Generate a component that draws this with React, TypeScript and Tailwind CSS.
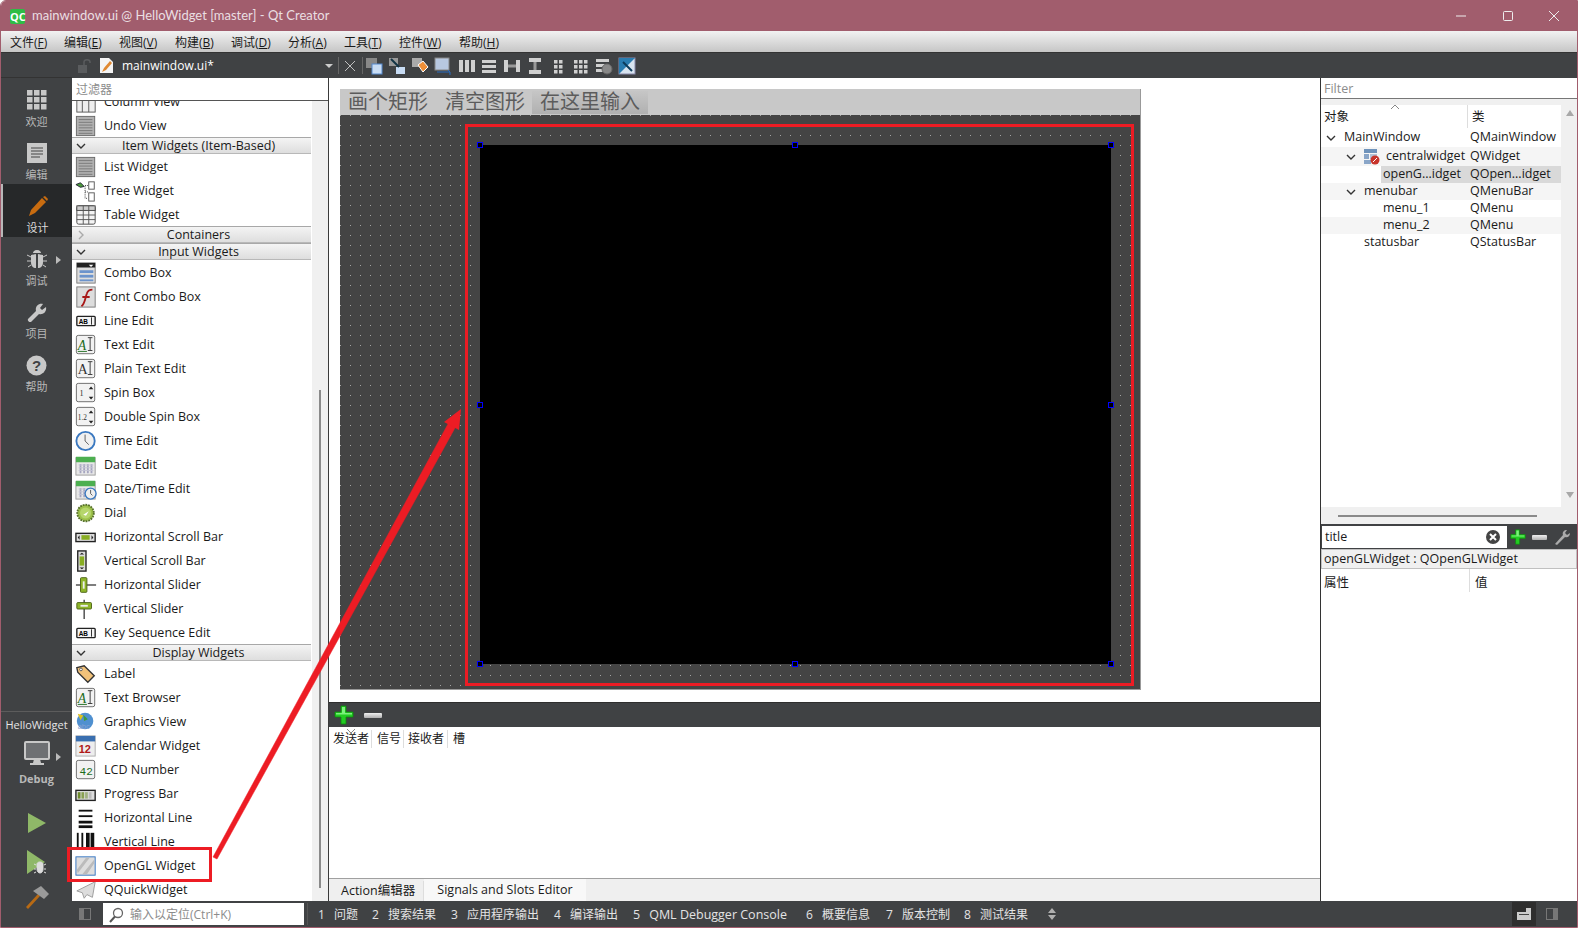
import React from "react";

const S = ({ children, size = 24, className = "" }: { children: React.ReactNode; size?: number; className?: string }) => (
  <svg width={size} height={size} viewBox="0 0 24 24" className={"shrink-0 " + className}>{children}</svg>
);

const box = <rect x="1.5" y="1.5" width="20" height="20" rx="2" fill="#f2f2f2" stroke="#666" />;
const lines = (
  <>
    <rect x="1.5" y="1.5" width="20" height="21" fill="#b0b0b0" stroke="#666" />
    {[5, 8, 11, 14, 17, 20].map((y) => <line key={y} x1="4" x2="19" y1={y} y2={y} stroke="#777" />)}
  </>
);
const cal = (
  <>
    <rect x="1" y="4" width="21" height="19" fill="#e8e8e8" stroke="#999" />
    <rect x="1" y="3" width="21" height="6" fill="#4caf50" />
    {[6, 10, 14, 18].map((x) => <line key={x} x1={x} x2={x} y1="11" y2="21" stroke="#a6a6c0" strokeWidth="2" />)}
    {[12, 15, 18].map((y) => <line key={y} x1="4" x2="20" y1={y} y2={y} stroke="#c4c4d4" />)}
  </>
);

const icons: Record<string, React.ReactNode> = {
  column: <><rect x="2" y="2" width="20" height="21" fill="#eee" stroke="#555" /><line x1="8" x2="8" y1="2" y2="23" stroke="#555" /><line x1="15" x2="15" y1="2" y2="23" stroke="#555" /></>,
  list: lines,
  tree: <><path d="M1 5l5-2 4 4-4 1z" fill="#4a9a3a" stroke="#223" /><path d="M14 6h-3v14h3M11 13h3" stroke="#333" strokeDasharray="1 1" fill="none" /><rect x="15" y="2" width="6" height="8" fill="#fff" stroke="#555" /><rect x="15" y="14" width="6" height="9" fill="#fff" stroke="#555" /></>,
  table: <><rect x="2" y="2" width="20" height="20" rx="2" fill="#f4f4f4" stroke="#444" /><rect x="2" y="2" width="20" height="5" fill="#ccc" stroke="#444" />{[9, 15].map((x) => <line key={x} x1={x} x2={x} y1="2" y2="22" stroke="#555" />)}{[12, 17].map((y) => <line key={y} x1="2" x2="22" y1={y} y2={y} stroke="#555" />)}</>,
  combo: <><rect x="2" y="1" width="20" height="22" fill="#ddd" stroke="#777" /><rect x="2" y="1" width="20" height="5" fill="#222" /><path d="M15 3h5l-2.500 2.500z" fill="#fff" /><rect x="5" y="9" width="15" height="3" fill="#6b93cc" /><rect x="5" y="14" width="15" height="3" fill="#6b93cc" /><rect x="5" y="19" width="15" height="2" fill="#6b93cc" /></>,
  font: <><rect x="2" y="1" width="20" height="22" fill="#ddd" stroke="#777" /><path d="M7 22c4-3 4-9 6-14 1-3 3-4 6-4M8 12h8" stroke="#a81818" strokeWidth="2" fill="none" /></>,
  line: <><rect x="2" y="7" width="20" height="10" rx="1" fill="#f4f4f4" stroke="#222" strokeWidth="1.500" /><text x="4" y="15" fontSize="7" fontWeight="700" fontFamily="Liberation Sans">AB</text><line x1="18" x2="18" y1="8" y2="16" stroke="#222" /></>,
  text: <>{box}<text x="3" y="17" fontSize="15" fontStyle="italic" fill="#1c6c1c" fontFamily="Liberation Serif">A</text><line x1="3" x2="13" y1="19" y2="19" stroke="#1c6c1c" /><path d="M14 4h5M16.500 4v14M14 18h5" stroke="#333" fill="none" /></>,
  plain: <>{box}<text x="3" y="17" fontSize="15" fill="#333" fontFamily="Liberation Serif">A</text><path d="M14 4h5M16.500 4v14M14 18h5" stroke="#333" fill="none" /></>,
  spin: <>{box}<text x="5" y="15" fontSize="9" fill="#333" fontFamily="Liberation Serif">1</text><path d="M15 8l2.500-3 2.500 3zM15 16l2.500 3 2.500-3z" fill="#222" /></>,
  dspin: <>{box}<text x="3" y="15" fontSize="8" fill="#333" fontFamily="Liberation Serif">1.2</text><path d="M15 8l2.500-3 2.500 3zM15 16l2.500 3 2.500-3z" fill="#222" /></>,
  time: <><circle cx="11.500" cy="12" r="10" fill="#f0f0f0" stroke="#3a78c0" strokeWidth="2" /><path d="M11 5v7l4 4" stroke="#555" fill="none" /></>,
  date: cal,
  datetime: <>{cal}<circle cx="17" cy="17" r="6" fill="#eee" stroke="#3a78c0" strokeWidth="1.500" /><path d="M17 13v4l2 2" stroke="#555" fill="none" /></>,
  dial: <><circle cx="11.500" cy="12" r="9" fill="#9cc04a" stroke="#56702a" strokeWidth="2" strokeDasharray="2 1" /><circle cx="11.500" cy="12" r="6" fill="#b6d66c" /><path d="M9 14l6-4-3 5z" fill="#fff" /></>,
  hscroll: <><rect x="1" y="8" width="21" height="9" fill="#ddd" stroke="#222" strokeWidth="1.500" /><rect x="7" y="10" width="9" height="5" fill="#88ad22" /><path d="M5 10v5l-2-2.500zM18 10v5l2-2.500z" fill="#222" /></>,
  vscroll: <><rect x="3" y="1" width="9" height="22" fill="#ddd" stroke="#222" strokeWidth="1.500" /><rect x="5" y="7" width="5" height="10" fill="#88ad22" /><path d="M5 5h5l-2.500-2zM5 19h5l-2.500 2z" fill="#222" /></>,
  hslider: <><line x1="1" x2="23" y1="12" y2="12" stroke="#444" strokeWidth="1.500" /><rect x="6" y="4" width="7" height="16" rx="1" fill="#8eb52a" stroke="#4a6014" /><line x1="9.500" x2="9.500" y1="8" y2="16" stroke="#eee" strokeWidth="2" /></>,
  vslider: <><line x1="10" x2="10" y1="2" y2="23" stroke="#444" strokeWidth="1.500" /><rect x="2" y="5" width="16" height="7" rx="1" fill="#8eb52a" stroke="#4a6014" /><line x1="6" x2="14" y1="8.500" y2="8.500" stroke="#eee" strokeWidth="2" /></>,
  label: <><path d="M2 5l8-2 11 11-7 7L3 10z" fill="#f2c27a" stroke="#333" strokeWidth="1.500" /><circle cx="6.500" cy="7" r="1.500" fill="#fff" stroke="#555" /></>,
  graphics: <><circle cx="11" cy="11" r="9" fill="#4f90d0" /><path d="M3 3l6 2-3 5z" fill="#e0c020" /><path d="M9 4l5 5-4 2z" fill="#3f9a3f" /><text x="3" y="20" fontSize="8" fill="#8aa0d0" fontFamily="Liberation Sans">abc</text></>,
  calendar: <><rect x="1" y="1" width="21" height="22" fill="#eee" stroke="#aaa" /><rect x="1" y="1" width="21" height="6" fill="#3a6fb0" /><text x="4" y="20" fontSize="12" fontWeight="700" fill="#b01818" fontFamily="Liberation Sans">12</text></>,
  lcd: <>{box}<text x="5" y="17" fontSize="12" fill="#1c6c1c" fontFamily="Liberation Mono">42</text></>,
  progress: <><rect x="1" y="8" width="21" height="11" fill="#ddd" stroke="#222" strokeWidth="1.500" /><rect x="3" y="10" width="3" height="7" fill="#6e8a2c" /><rect x="7" y="10" width="3" height="7" fill="#88a050" /><rect x="11" y="10" width="3" height="7" fill="#a0b080" /><rect x="15" y="10" width="3" height="7" fill="#bbb" /></>,
  hline: <>{[3, 9, 15, 20].map((y, i) => <rect key={y} x="4" y={y} width="15" height={i > 1 ? 3 : 2} fill="#111" />)}</>,
  vline: <>{[2, 7, 12, 17].map((x, i) => <rect key={x} x={x} y="2" width={i > 1 ? 4 : 2} height="18" fill="#111" />)}</>,
  opengl: <><rect x="1" y="2" width="21" height="20" fill="#ddd" stroke="#2d70c0" /><path d="M2 16L12 3h4L3 20zM8 21L21 5v4L13 21z" fill="#bbb" /></>,
  quick: <path d="M22 3L2 13l6 2 2 6 3-4 6 3z" fill="#ddd" stroke="#999" />,
};

type Row = [string, string] | [string];
const widgets: Row[] = [
  ["Column View", "column"], ["Undo View", "list"], ["Item Widgets (Item-Based)"], ["List Widget", "list"], ["Tree Widget", "tree"], ["Table Widget", "table"], ["Containers"], ["Input Widgets"],
  ["Combo Box", "combo"], ["Font Combo Box", "font"], ["Line Edit", "line"], ["Text Edit", "text"], ["Plain Text Edit", "plain"], ["Spin Box", "spin"], ["Double Spin Box", "dspin"], ["Time Edit", "time"], ["Date Edit", "date"], ["Date/Time Edit", "datetime"], ["Dial", "dial"], ["Horizontal Scroll Bar", "hscroll"], ["Vertical Scroll Bar", "vscroll"], ["Horizontal Slider", "hslider"], ["Vertical Slider", "vslider"], ["Key Sequence Edit", "line"], ["Display Widgets"],
  ["Label", "label"], ["Text Browser", "text"], ["Graphics View", "graphics"], ["Calendar Widget", "calendar"], ["LCD Number", "lcd"], ["Progress Bar", "progress"], ["Horizontal Line", "hline"], ["Vertical Line", "vline"], ["OpenGL Widget", "opengl"], ["QQuickWidget", "quick"],
];

const Chevron = ({ open = true, color = "#333" }: { open?: boolean; color?: string }) => (
  <svg width="10" height="10" viewBox="0 0 10 10" className="shrink-0">
    <path d={open ? "M1 3l4 4 4-4" : "M3 1l4 4-4 4"} stroke={color} strokeWidth="1.400" fill="none" />
  </svg>
);

const WidgetBox = () => (
  <div className="w-[257px] shrink-0 flex flex-col border-r border-[#3a3a3a] bg-white">
    <div className="h-[23px] shrink-0 pl-[4px] pt-[2px] flex items-center text-[12px] text-[#8c8c8c] border-b border-[#555]">过滤器</div>
    <div className="flex-1 flex overflow-hidden">
      <div className="w-[240px] shrink-0 -mt-[12px]">
        {widgets.map((r) =>
          r.length === 1 ? (
            <div key={r[0]} className="h-[17px] flex items-center relative mr-[1px] pl-[4px] border-t border-[#a8a8a8] border-b-[#b8b8b8] border-b bg-gradient-to-b from-[#f4f4f4] to-[#dedede]">
              <Chevron open={r[0] !== "Containers"} color={r[0] === "Containers" ? "#aaa" : "#333"} />
              <span className="flex-1 text-center text-[12.5px] leading-none text-[#1a1a1a] pt-[2px]">{r[0]}</span>
            </div>
          ) : (
            <div key={r[0]} className="h-[24px] flex items-center pl-[3px] pt-[2px] text-[12.5px] text-[#1a1a1a]">
              <S size={22} className="mr-[7px]">{icons[r[1]]}</S>
              <span>{r[0]}</span>
            </div>
          )
        )}
      </div>
      <div className="flex-1 bg-[#f0f0f0] flex justify-center">
        <div className="w-[2px] bg-[#8a8a8a] mt-[289px] mb-[13px]" />
      </div>
    </div>
  </div>
);

const Handle = ({ className }: { className: string }) => (
  <div className={"absolute w-[6px] h-[6px] border border-[#0000ff] bg-black " + className} />
);

const Designer = () => (
  <div className="flex-1 bg-white pl-[11px] pt-[11px]">
    <div className="w-[801px] h-[601px] flex flex-col border-r border-b border-[#999]">
      <div className="h-[26px] shrink-0 bg-[#c8c8c8] flex items-center text-[20px] text-[#5c5c5c] leading-none">
        <span className="ml-[8px]">画个矩形</span>
        <span className="ml-[17px]">清空图形</span>
        <span className="ml-[7px] h-[23px] w-[116px] pl-[8px] flex items-center bg-gradient-to-b from-[#c6c6c6] to-[#b0b0b0]">在这里输入</span>
      </div>
      <div className="flex-1 pt-[30px] pl-[140px] bg-[#444444] bg-[radial-gradient(circle_at_0.5px_0.5px,#a4a4a4_0.7px,transparent_0.71px)] bg-[length:10px_10px]">
        <div className="relative w-[631px] h-[519px] bg-black">
          <Handle className="-left-[3px] -top-[3px]" />
          <Handle className="left-[312px] -top-[3px]" />
          <Handle className="-right-[3px] -top-[3px]" />
          <Handle className="-left-[3px] top-[257px]" />
          <Handle className="-right-[3px] top-[257px]" />
          <Handle className="-left-[3px] -bottom-[3px]" />
          <Handle className="left-[312px] -bottom-[3px]" />
          <Handle className="-right-[3px] -bottom-[3px]" />
        </div>
      </div>
    </div>
  </div>
);

const Plus = ({ size = 20 }: { size?: number }) => (
  <svg width={size} height={size} viewBox="0 0 20 20" className="shrink-0">
    <path d="M7 1h5v6h7v5h-7v7H7v-7H1V7h6z" fill="#22cc22" stroke="#0d8a0d" strokeWidth="0.800" />
    <path d="M8 2h3v6H8zM2 8h16v1.500H2z" fill="#7cf07c" />
  </svg>
);
const Minus = ({ w = 18 }: { w?: number }) => (
  <div className="h-[5px] rounded-[1px] bg-gradient-to-b from-[#f0f0f0] to-[#b0b0b0]" style={{ width: w }} />
);

const Signals = () => (
  <div className="h-[199px] shrink-0 flex flex-col bg-white">
    <div className="h-[25px] shrink-0 bg-[#404244] border-t border-[#2e2e2e] flex items-center pl-[5px] gap-[10px]">
      <Plus />
      <Minus />
    </div>
    <div className="flex text-[12px] text-[#1a1a1a] h-[23px] items-center">
      <div className="relative w-[43px] pl-[4px] border-r border-[#ddd]">发送者
        <svg width="8" height="4" viewBox="0 0 8 4" className="absolute left-[18px] -top-[1px]"><path d="M0 0l4 4 4-4" stroke="#888" fill="none" /></svg>
      </div>
      <div className="w-[32px] pl-[5px] border-r border-[#ddd]">信号</div>
      <div className="w-[44px] pl-[4px] border-r border-[#ddd]">接收者</div>
      <div className="pl-[5px]">槽</div>
    </div>
    <div className="flex-1" />
    <div className="h-[23px] shrink-0 bg-[#efefef] border-t border-[#a0a0a0] flex items-end text-[12.5px] text-[#1a1a1a]">
      <div className="w-[95px] h-[20px] pl-[12px] flex items-center border-r border-[#ddd]">Action编辑器</div>
      <div className="w-[162px] h-[22px] bg-[#f8f8f8] flex items-center justify-center">Signals and Slots Editor</div>
    </div>
  </div>
);

const tree: [string, string, number, string, boolean, boolean][] = [
  ["MainWindow", "QMainWindow", 23, "h-[19px]", true, false],
  ["centralwidget", "QWidget", 43, "h-[19px]", true, true],
  ["openG...idget", "QOpen...idget", 62, "h-[17px]", false, false],
  ["menubar", "QMenuBar", 43, "h-[17px]", true, true],
  ["menu_1", "QMenu", 62, "h-[17px]", false, false],
  ["menu_2", "QMenu", 62, "h-[17px]", false, true],
  ["statusbar", "QStatusBar", 43, "h-[17px]", false, false],
];

const RightPanel = () => (
  <div className="w-[257px] shrink-0 flex flex-col border-l border-[#333] text-[12.5px] text-[#1a1a1a]">
    <div className="h-[21px] shrink-0 pl-[3px] pt-[2px] bg-white border-b border-[#777] text-[#8c8c8c] flex items-center">Filter</div>
    <div className="h-[425px] shrink-0 flex flex-col bg-[#f0f0f0]">
      <div className="flex-1 flex">
        <div className="flex-1 bg-white mt-[6px] flex flex-col">
          <div className="h-[23px] flex items-center relative">
            <div className="w-[147px] pl-[3px] pt-[2px] h-full flex items-center border-r border-[#ddd]">对象</div>
            <div className="pl-[4px] pt-[2px]">类</div>
            <svg width="8" height="4" viewBox="0 0 8 4" className="absolute left-[70px] top-0"><path d="M0 4l4-4 4 4" stroke="#888" fill="none" /></svg>
          </div>
          {tree.map(([n, c, x, h, open, alt]) => (
            <div key={n} className={"relative flex items-center " + h + (alt ? " bg-[#f5f5f5]" : "")}>
              <div className="w-[149px] shrink-0 relative h-full flex items-center" style={{ paddingLeft: x }}>
                {n === "openG...idget" && <div className="absolute left-[60px] right-0 top-0 bottom-0 bg-[#d9d9d9]" />}
                {open && <span className="absolute" style={{ left: x - 18 }}><Chevron /></span>}
                {n === "centralwidget" && (
                  <svg width="16" height="16" viewBox="0 0 16 16" className="shrink-0 mr-[6px]">
                    <rect x="0" y="0" width="13" height="4" fill="#6f93bb" /><rect x="0" y="5" width="5" height="5" fill="#8aa6c8" /><rect x="6" y="5" width="7" height="5" fill="#b4c4d8" /><rect x="0" y="11" width="7" height="4" fill="#8aa6c8" />
                    <circle cx="11" cy="11" r="4.500" fill="#c8352c" /><path d="M9 13l4-4" stroke="#fff" />
                  </svg>
                )}
                <span className="relative">{n}</span>
              </div>
              <div className="relative w-[91px] shrink-0 h-full flex items-center">
                {n === "openG...idget" && <div className="absolute inset-0 bg-[#d9d9d9]" />}
                <span className="relative">{c}</span>
              </div>
            </div>
          ))}
        </div>
        <div className="w-[17px] shrink-0 flex flex-col items-center justify-between pt-[11px] pb-[9px]">
          <svg width="8" height="6" viewBox="0 0 8 6"><path d="M0 6l4-6 4 6z" fill="#a8a8a8" /></svg>
          <svg width="8" height="6" viewBox="0 0 8 6"><path d="M0 0l4 6 4-6z" fill="#a8a8a8" /></svg>
        </div>
      </div>
      <div className="h-[17px] shrink-0 flex items-center pl-[17px]">
        <div className="w-[199px] h-[2px] bg-[#8a8a8a]" />
      </div>
    </div>
    <div className="h-[25px] shrink-0 bg-[#404244] flex items-center pt-[1px]">
      <div className="w-[185px] h-[22px] bg-white ml-[1px] pl-[3px] pr-[6px] flex items-center justify-between">
        <span>title</span>
        <svg width="16" height="16" viewBox="0 0 16 16"><circle cx="8" cy="8" r="7" fill="#444" /><path d="M5 5l6 6M11 5l-6 6" stroke="#fff" strokeWidth="2" /></svg>
      </div>
      <div className="ml-[3px]"><Plus size={16} /></div>
      <div className="ml-[6px]"><Minus w={15} /></div>
      <svg width="18" height="18" viewBox="0 0 18 18" className="ml-[6px]"><path d="M2 16l8-9c-1-3 1-5 4-5l-2 3 2 2 3-2c0 3-2 5-5 4l-8 8z" fill="#aaa" /></svg>
    </div>
    <div className="h-[20px] shrink-0 bg-[#f0f0f0] border border-[#c0c0c0] pl-[2px] flex items-center">openGLWidget : QOpenGLWidget</div>
    <div className="h-[23px] shrink-0 bg-white flex items-center">
      <div className="w-[149px] pl-[3px] pt-[5px] h-full flex items-center border-r border-[#ddd]">属性</div>
      <div className="pl-[5px] pt-[5px]">值</div>
    </div>
    <div className="flex-1 bg-white" />
  </div>
);

const RailItem = ({ label, icon, active = false, arrow = false }: { label: string; icon: React.ReactNode; active?: boolean; arrow?: boolean }) => (
  <div className={"h-[53px] relative flex flex-col items-center pt-[9px] text-[11px] leading-[14px] " + (active ? "bg-[#262829] border-l-2 border-[#b8b8b8] text-[#dcdcdc]" : "text-[#b8b8b8]")}>
    <div className="h-[26px] flex items-center">{icon}</div>
    <span className="mt-[2px]">{label}</span>
    {arrow && <svg width="5" height="8" viewBox="0 0 5 8" className="absolute right-[11px] top-[19px]"><path d="M0 0l5 4-5 4z" fill="#bbb" /></svg>}
  </div>
);

const Rail = () => (
  <div className="w-[71px] shrink-0 bg-[#404244] flex flex-col">
    <div className="h-[25px] border-b border-[#333]" />
    <RailItem label="欢迎" icon={<svg width="20" height="20" viewBox="0 0 20 20" fill="#c8c8c8">{[0, 7, 14].flatMap((y) => [0, 7, 14].map((x) => <rect key={x + "-" + y} x={x} y={y} width="5.500" height="5.500" />))}</svg>} />
    <RailItem label="编辑" icon={<svg width="20" height="20" viewBox="0 0 20 20"><rect width="20" height="20" fill="#c8c8c8" /><path d="M4 5h12M4 8h12M4 11h12M4 14h9" stroke="#444" /></svg>} />
    <RailItem active label="设计" icon={<svg width="22" height="22" viewBox="0 0 22 22"><path d="M2 21l2-6L15 3l4 4L8 18z" fill="#c86c10" /><path d="M16 2l2-1 3 3-1 2z" fill="#c86c10" /></svg>} />
    <RailItem arrow label="调试" icon={<svg width="20" height="20" viewBox="0 0 20 20"><path d="M10 1c-3 0-4 2-4 3h8c0-1-1-3-4-3zM4 6c1 0 5-1 5-1v14c-3 0-5-2-5-6zM16 6c-1 0-5-1-5-1v14c3 0 5-2 5-6z" fill="#c8c8c8" /><path d="M4 8L0 6M4 12H0M4 16l-3 2M16 8l4-2M16 12h4M16 16l3 2" stroke="#c8c8c8" /></svg>} />
    <RailItem label="项目" icon={<svg width="20" height="20" viewBox="0 0 20 20"><path d="M1 17l8-8c-1-4 2-8 7-7l-3 4 2 2 4-3c1 5-3 8-7 7l-8 8c-1 1-4-1-3-3z" fill="#c8c8c8" /></svg>} />
    <RailItem label="帮助" icon={<svg width="21" height="21" viewBox="0 0 21 21"><circle cx="10.500" cy="10.500" r="10" fill="#c8c8c8" /><text x="10.500" y="16" textAnchor="middle" fontSize="15" fontWeight="700" fill="#404244" fontFamily="Liberation Sans">?</text></svg>} />
    <div className="flex-1" />
    <div className="h-[216px] shrink-0 border-t border-[#5c5c5c] flex flex-col items-center relative text-[#e4e4e4]">
      <div className="h-[27px] flex items-center text-[11px]">HelloWidget</div>
      <svg width="26" height="25" viewBox="0 0 26 25" className="mt-[2px]"><rect x="1" y="1" width="24" height="17" rx="1" fill="#6e7073" stroke="#c8c8c8" strokeWidth="2" /><path d="M10 18h6l1 4h3v2H6v-2h3z" fill="#c8c8c8" /></svg>
      <svg width="5" height="8" viewBox="0 0 5 8" className="absolute right-[11px] top-[41px]"><path d="M0 0l5 4-5 4z" fill="#bbb" /></svg>
      <div className="text-[11px] font-bold text-[#b8b8b8] mt-[6px] leading-[14px]">Debug</div>
      <svg width="18" height="20" viewBox="0 0 18 20" className="mt-[27px]"><path d="M0 0l18 10L0 20z" fill="#8fb868" /></svg>
      <svg width="22" height="26" viewBox="0 0 22 26" className="mt-[17px]"><path d="M1 0l18 12L1 24z" fill="#8fb868" /><path d="M14 12c-2 0-3 1-3 2v5c0 2 1 4 3 4s3-2 3-4v-5c0-1-1-2-3-2zM10 15l-2-1M10 19H8M10 22l-2 1M18 15l2-1M18 19h2M18 22l2 1" fill="#ddd" stroke="#ddd" /></svg>
      <svg width="24" height="24" viewBox="0 0 24 24" className="mt-[9px]"><path d="M1 22L13 9l2 2L3 24z" fill="#b86a14" /><path d="M8 6l8-5 8 8-5 5z" fill="#9a9a9a" /></svg>
    </div>
  </div>
);

const Toolbar = () => {
  const t = (n: React.ReactNode, w: string, k: number) => <div key={k} className={"flex justify-center shrink-0 " + w}>{n}</div>;
  const blue = <><rect x="1" y="1" width="11" height="10" fill="#888" /><rect x="7" y="7" width="10" height="10" fill="#c8dcf4" stroke="#5588cc" /></>;
  const bars = (v: boolean) => v
    ? [2, 8, 14].map((x) => <rect key={x} x={x} y="3" width="4" height="12" fill="#d0d0d0" />)
    : [3, 8, 13].map((y) => <rect key={y} x="2" y={y} width="14" height="3" fill="#d0d0d0" />);
  const list: React.ReactNode[] = [
    blue,
    <><rect x="1" y="1" width="9" height="8" fill="#999" /><rect x="8" y="10" width="9" height="7" fill="#c8dcf4" /><path d="M3 2l8 8" stroke="#134" strokeWidth="2" /></>,
    <><rect x="1" y="1" width="10" height="9" fill="#aaa" /><path d="M7 8l5-4 5 6-5 5z" fill="#f09038" stroke="#fff" /></>,
    <><rect x="1" y="1" width="14" height="12" fill="#b8c8e0" stroke="#888" /><path d="M3 15h13l-2-2M16 15v3" stroke="#2a6cc0" fill="none" /></>,
    bars(true),
    bars(false),
    <><rect x="1" y="3" width="4" height="12" fill="#d0d0d0" /><rect x="13" y="3" width="4" height="12" fill="#d0d0d0" /><path d="M5 9h8" stroke="#999" strokeWidth="3" /></>,
    <><rect x="3" y="1" width="12" height="4" fill="#d0d0d0" /><rect x="3" y="13" width="12" height="4" fill="#d0d0d0" /><path d="M9 5v8" stroke="#999" strokeWidth="3" /></>,
    <>{[[5, 3], [10, 3], [5, 8], [10, 8], [5, 13], [10, 13]].map(([x, y]) => <rect key={x + "-" + y} x={x} y={y} width="3.500" height="3.500" fill="#d0d0d0" />)}</>,
    <>{[3, 8, 13].flatMap((y) => [2, 7, 12].map((x) => <rect key={x + "-" + y} x={x} y={y} width="3.500" height="3.500" fill="#d0d0d0" />))}</>,
    <>{[2, 7, 12].map((y) => <rect key={y} x="1" y={y} width="13" height="3" fill="#d0d0d0" />)}<circle cx="12" cy="12" r="5" fill="#888" stroke="#666" /></>,
    <><rect x="1" y="1" width="16" height="16" fill="#d8e4f0" stroke="#88a" /><path d="M1 1h16L1 17z" fill="#2a7cb0" /><path d="M5 5l9 9" stroke="#0c3c5c" strokeWidth="2" /></>,
  ];
  return (
    <div className="h-[25px] shrink-0 bg-[#404244] flex items-center text-white">
      <div className="w-[266px] shrink-0 flex items-center h-full">
        <svg width="13" height="14" viewBox="0 0 13 14" className="ml-[6px]"><rect y="6" width="9" height="8" fill="#5a5c5e" /><path d="M6 6V3c0-3 6-3 6 0v1" stroke="#5a5c5e" strokeWidth="1.500" fill="none" /></svg>
        <svg width="15" height="17" viewBox="0 0 15 17" className="ml-[8px]"><path d="M1 1h9l4 4v11H1z" fill="#f4f4f4" /><path d="M3 15l2-4 6-7 2 2-6 7z" fill="#e08830" /></svg>
        <span className="ml-[8px] text-[12px]">mainwindow.ui*</span>
        <svg width="8" height="4" viewBox="0 0 8 4" className="ml-auto mr-[5px]"><path d="M0 0h8L4 4z" fill="#ccc" /></svg>
      </div>
      <div className="w-px h-[17px] bg-[#666]" />
      <svg width="12" height="12" viewBox="0 0 12 12" className="ml-[5px] mr-[6px]"><path d="M1 1l10 10M11 1L1 11" stroke="#c0c0c0" /></svg>
      <div className="w-px h-[17px] bg-[#666]" />
      <div className="flex -ml-[1px]">
        {list.map((n, i) => t(<svg width="18" height="18" viewBox="0 0 18 18">{n}</svg>, "w-[23px]", i))}
      </div>
    </div>
  );
};

const statusItems: [string, string, string][] = [
  ["1", "问题", "w-[54px]"], ["2", "搜索结果", "w-[79px]"], ["3", "应用程序输出", "w-[103px]"], ["4", "编译输出", "w-[79px]"], ["5", "QML Debugger Console", "w-[173px] text-[12.5px]"], ["6", "概要信息", "w-[80px]"], ["7", "版本控制", "w-[78px]"], ["8", "测试结果", "w-[84px]"],
];

const StatusBar = () => (
  <div className="h-[26px] shrink-0 bg-[#404244] flex items-center text-[12px] text-[#e4e4e4]">
    <svg width="12" height="12" viewBox="0 0 12 12" className="ml-[7px]"><rect x="0.500" y="0.500" width="11" height="11" fill="none" stroke="#777" /><rect x="1" y="1" width="4" height="10" fill="#777" /></svg>
    <div className="ml-[12px] w-[201px] h-[22px] bg-white flex items-center pl-[6px] pt-[1px] text-[#8c8c8c]">
      <svg width="18" height="16" viewBox="0 0 18 16" className="mr-[3px]"><circle cx="9" cy="6" r="4.500" fill="none" stroke="#666" strokeWidth="1.300" /><path d="M6 9.500L1 15" stroke="#555" strokeWidth="2" /></svg>
      输入以定位(Ctrl+K)
    </div>
    <div className="w-px h-[22px] bg-[#555] ml-[3px] mr-[10px]" />
    {statusItems.map(([n, l, w]) => (
      <div key={n} className={"shrink-0 flex gap-[9px] pt-[2px] " + w}><span>{n}</span><span>{l}</span></div>
    ))}
    <svg width="8" height="12" viewBox="0 0 8 12"><path d="M0 5l4-5 4 5zM0 7l4 5 4-5z" fill="#b0b0b0" /></svg>
    <div className="ml-auto mr-[7px] flex items-center gap-[10px]">
      <div className="w-[24px] h-[24px] bg-[#2e2e2e] flex items-center justify-center">
        <svg width="14" height="12" viewBox="0 0 14 12"><rect y="4" width="14" height="8" fill="#ccc" /><rect x="9" width="5" height="4" fill="#ccc" /><rect x="2" y="6" width="10" height="1" fill="#444" /></svg>
      </div>
      <svg width="12" height="12" viewBox="0 0 12 12" className="mr-[12px]"><rect x="0.500" y="0.500" width="11" height="11" fill="none" stroke="#777" /><rect x="7" y="1" width="4" height="10" fill="#777" /></svg>
    </div>
  </div>
);

export default function App() {
  return (
    <div className="relative w-[1578px] h-[928px] overflow-hidden border border-[#a15d6d] rounded-tl-[6px] flex flex-col bg-white font-['Open_Sans','Noto_Sans_CJK_SC',sans-serif]">
      <div className="h-[30px] shrink-0 bg-[#a15d6d] flex items-center text-[#eadfe2] text-[13px]">
        <div className="ml-[9px] w-[15px] h-[15px] rounded-[2px] bg-[#2ebd45] text-white text-[11px] font-bold leading-[15px] text-center">QC</div>
        <span className="ml-[7px] font-['Lato','Noto_Sans_CJK_SC',sans-serif]">mainwindow.ui @ HelloWidget [master] - Qt Creator</span>
        <div className="ml-auto flex items-center">
          <svg width="12" height="12" viewBox="0 0 12 12" className="mr-[35px]"><path d="M1 6h10" stroke="#eee" /></svg>
          <svg width="12" height="12" viewBox="0 0 12 12" className="mr-[34px]"><rect x="1.500" y="1.500" width="9" height="9" rx="1" fill="none" stroke="#eee" /></svg>
          <svg width="12" height="12" viewBox="0 0 12 12" className="mr-[17px]"><path d="M1 1l10 10M11 1L1 11" stroke="#eee" /></svg>
        </div>
      </div>
      <div className="h-[22px] shrink-0 flex items-center pt-[2px] bg-gradient-to-b from-[#f2f2f2] to-[#c6c6c6] border-b border-[#333] text-[12px] text-[#1a1a1a] pl-[9px]">
        {[["文件", "F", "w-[54px]"], ["编辑", "E", "w-[55px]"], ["视图", "V", "w-[56px]"], ["构建", "B", "w-[56px]"], ["调试", "D", "w-[57px]"], ["分析", "A", "w-[56px]"], ["工具", "T", "w-[55px]"], ["控件", "W", "w-[60px]"], ["帮助", "H", "w-[50px]"]].map(([a, b, w]) => (
          <span key={a} className={"shrink-0 " + w}>{a}(<u>{b}</u>)</span>
        ))}
      </div>
      <div className="flex-1 flex min-h-0">
        <Rail />
        <div className="flex-1 min-w-0 flex flex-col">
          <Toolbar />
          <div className="flex-1 flex min-h-0">
            <WidgetBox />
            <div className="flex-1 min-w-0 flex flex-col">
              <Designer />
              <Signals />
            </div>
            <RightPanel />
          </div>
          <StatusBar />
        </div>
      </div>

      <div className="absolute left-[464px] top-[123px] w-[669px] h-[562px] border-[3px] border-[#ed1c24]" />
      <div className="absolute left-[66px] top-[846px] w-[145px] h-[35px] border-[3px] border-[#ed1c24]" />
      <svg width="1578" height="928" viewBox="0 0 1578 928" className="absolute left-[-1px] top-[-1px] pointer-events-none">
        <path d="M217 859L213 857L448.500 423L455.500 427z" fill="#ed1c24" stroke="#ed1c24" strokeWidth="0.500" strokeLinejoin="round" />
        <path d="M461 409L459 430L444 422z" fill="#ed1c24" />
      </svg>
    </div>
  );
}
